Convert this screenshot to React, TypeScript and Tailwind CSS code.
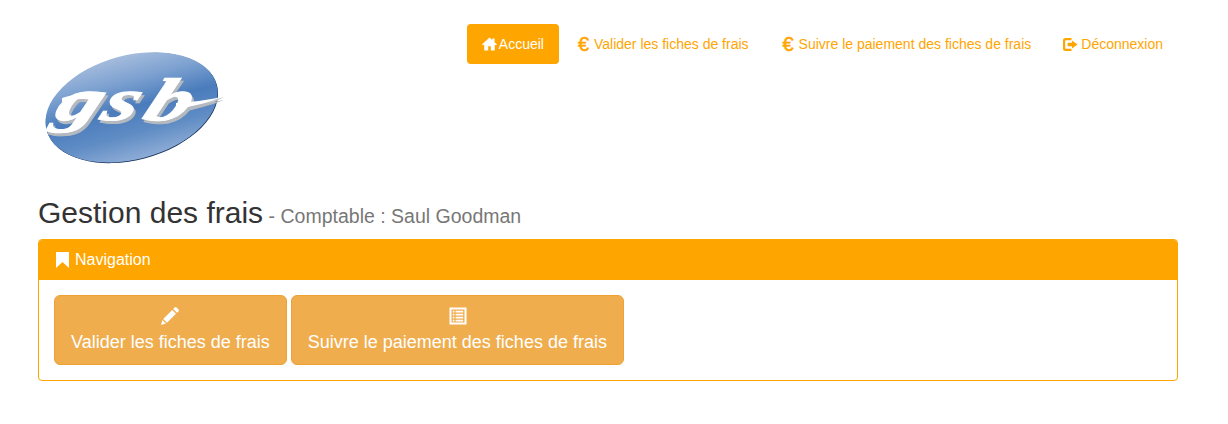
const font = { fontFamily: '"Liberation Sans", Arial, sans-serif' };

function HomeIcon() {
  return (
    <svg viewBox="0 0 16 14" className="w-[15px] h-[14px] fill-current shrink-0">
      <path d="M8 0 L11 2.8 V1 H13.4 V5 L16 7.6 L14.8 8.4 L13.6 7.4 V14 H9.4 V9.4 H6.6 V14 H2.4 V7.4 L1.2 8.4 L0 7.6 Z" />
    </svg>
  );
}
function Euro() {
  return (
    <span className="text-[20px] leading-5 inline-block w-[14px] shrink-0 translate-x-0.5 [-webkit-text-stroke:0.5px_currentColor]">€</span>
  );
}
function LogoutIcon() {
  return (
    <svg viewBox="0 0 15 13" className="w-[15px] h-[13px] fill-current shrink-0">
      <path d="M2.5 0 H8.5 V2.2 H3 Q2.2 2.2 2.2 3 V10 Q2.2 10.8 3 10.8 H8.5 V13 H2.5 Q0 13 0 10.5 V2.5 Q0 0 2.5 0 Z" />
      <path d="M4.6 4.8 H9 V2.4 L14.5 6.5 L9 10.6 V8.2 H4.6 Z" />
    </svg>
  );
}
function Bookmark() {
  return (
    <svg viewBox="0 0 13 16" className="w-[13px] h-4 fill-current shrink-0">
      <path d="M0 0 H13 V16 L6.5 10 L0 16 Z" />
    </svg>
  );
}
function Pencil() {
  return (
    <svg viewBox="0 0 18 18" className="w-[18px] h-[18px] fill-current">
      <path d="M13.6 0.6 L15 0 L18 3 L17.4 4.4 L16 5.8 L12.2 2 Z" />
      <path d="M11.2 3 L15 6.8 L6 15.8 L2.2 12 Z" />
      <path d="M1.4 13 L5 16.6 L0 18 Z" />
    </svg>
  );
}
function ListAlt() {
  return (
    <svg viewBox="0 0 18 18" className="w-[18px] h-[18px]">
      <path fillRule="evenodd" className="fill-current" d="M0.5 0.5 H17.5 V17.5 H0.5 Z M2.5 2.5 V15.5 H15.5 V2.5 Z" />
      <path className="fill-current" d="M3.8 3.8 H5.4 V5.6 H3.8 Z M6.6 3.8 H14.2 V5.6 H6.6 Z M3.8 6.8 H5.4 V8.6 H3.8 Z M6.6 6.8 H14.2 V8.6 H6.6 Z M3.8 9.8 H5.4 V11.6 H3.8 Z M6.6 9.8 H14.2 V11.6 H6.6 Z M3.8 12.8 H5.4 V14.4 H3.8 Z M6.6 12.8 H14.2 V14.4 H6.6 Z" />
    </svg>
  );
}

function Logo() {
  return (
    <svg viewBox="38 46 192 124" className="w-[192px] h-[124px] shrink-0">
      <defs>
        <linearGradient id="oval" x1="0.5" y1="0" x2="0.5" y2="1">
          <stop offset="0" stopColor="#a4bbdc" />
          <stop offset="0.25" stopColor="#7ba0d0" />
          <stop offset="0.5" stopColor="#4a7cbc" />
          <stop offset="0.75" stopColor="#5f8cc4" />
          <stop offset="1" stopColor="#8dacd6" />
        </linearGradient>
      </defs>
      <ellipse cx="132" cy="108" rx="88" ry="52" fill="#16305c" transform="rotate(-15 132 108)" />
      <ellipse cx="131.5" cy="107.3" rx="88" ry="52" fill="url(#oval)" transform="rotate(-15 131.5 107.3)" />
      <path d="M176 106 Q200 104 224 97 Q205 108 178 113 Z" fill="#c3c7cd" />
      <g style={{ filter: "drop-shadow(2px 3px 0 #b4b8bf)" }}>
        <path d="M62 98 Q80 92 98 95 L92 100 Q78 97 62 102 Z" fill="#ffffff" />
        <text
          transform="translate(52 120) skewX(-22) scale(1.5 1)"
          x="0 31 59"
          y="0"
          fill="#ffffff"
          stroke="#ffffff"
          strokeWidth="1"
          fontSize="60"
          fontWeight="bold"
          fontStyle="italic"
          style={{ fontFamily: '"Liberation Serif", serif' }}
        >
          gsb
        </text>
        <path d="M176 103 Q198 102 222 97 Q203 105 176 109 Z" fill="#ffffff" />
      </g>
    </svg>
  );
}

const navLink = "flex items-center h-10 px-[15px] rounded text-[14px] leading-5 text-[#ffa500]";
const bigBtn = "bg-[#f0ad4e] border border-[#eea236] rounded-md text-white text-[18px] leading-6 px-4 py-2.5 flex flex-col items-center";

export default function App() {
  return (
    <div className="min-h-[424px] bg-white pl-[38px] pr-[50px] pt-6" style={font}>
      <header className="flex justify-between items-start">
        <div className="mt-[22px]">
          <Logo />
        </div>
        <nav className="flex gap-0.5">
          <a className={`${navLink} bg-[#ffa500] text-white gap-[2px]`}>
            <HomeIcon />
            <span>Accueil</span>
          </a>
          <a className={`${navLink} gap-1`}>
            <Euro />
            <span>Valider les fiches de frais</span>
          </a>
          <a className={`${navLink} gap-1`}>
            <Euro />
            <span>Suivre le paiement des fiches de frais</span>
          </a>
          <a className={`${navLink} gap-[3px]`}>
            <LogoutIcon />
            <span>Déconnexion</span>
          </a>
        </nav>
      </header>

      <h1 className="mt-[26px] mb-[6px] text-[30px] leading-[33px] font-normal text-[#333333] flex items-baseline gap-[5.5px]">
        <span>Gestion des frais</span>
        <small className="text-[19.5px] font-normal text-[#777777]">- Comptable : Saul Goodman</small>
      </h1>

      <section className="border border-[#ffa500] rounded">
        <div className="bg-[#ffa500] text-white text-[16px] leading-[18px] px-[17px] py-[11px] flex items-center gap-[6px] rounded-t-[3px]">
          <Bookmark />
          <span>Navigation</span>
        </div>
        <div className="p-[15px] flex gap-1">
          <button className={bigBtn}>
            <span className="h-6 pt-px"><Pencil /></span>
            <span>Valider les fiches de frais</span>
          </button>
          <button className={bigBtn}>
            <span className="h-6 pt-px translate-x-px"><ListAlt /></span>
            <span>Suivre le paiement des fiches de frais</span>
          </button>
        </div>
      </section>
    </div>
  );
}
